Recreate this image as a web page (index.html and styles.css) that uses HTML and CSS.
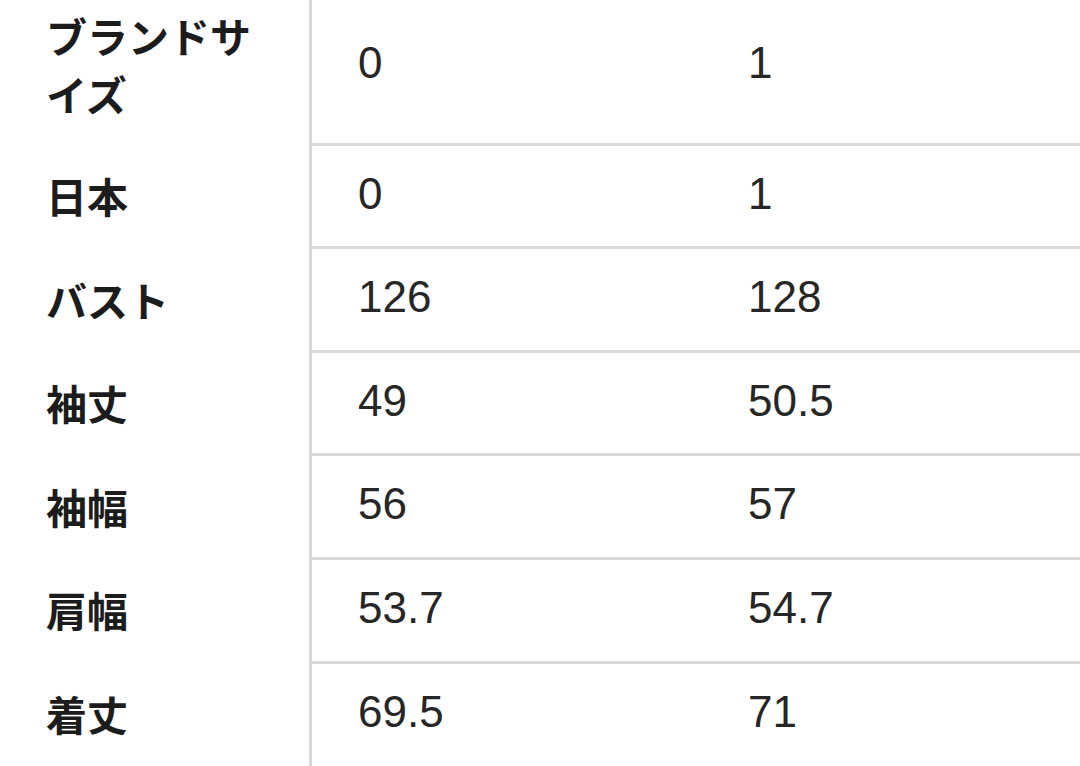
FILE: index.html
```html
<!DOCTYPE html>
<html lang="ja">
<head>
<meta charset="utf-8">
<title>サイズ表</title>
<link rel="stylesheet" href="styles.css">
</head>
<body>
<table class="size-table">
  <colgroup>
    <col class="col-label">
    <col class="col-a">
    <col class="col-b">
  </colgroup>
  <tbody>
    <tr><th>ブランドサイズ</th><td>0</td><td>1</td></tr>
    <tr><th>日本</th><td>0</td><td>1</td></tr>
    <tr><th>バスト</th><td>126</td><td>128</td></tr>
    <tr><th>袖丈</th><td>49</td><td>50.5</td></tr>
    <tr><th>袖幅</th><td>56</td><td>57</td></tr>
    <tr><th>肩幅</th><td>53.7</td><td>54.7</td></tr>
    <tr><th>着丈</th><td>69.5</td><td>71</td></tr>
  </tbody>
</table>
</body>
</html>
```

FILE: styles.css
```css
html, body {
  margin: 0;
  padding: 0;
  background: #ffffff;
  overflow: hidden;
}

.size-table {
  border-collapse: separate;
  border-spacing: 0;
  table-layout: fixed;
  width: 1080px;
  margin-top: -13px;
  color: #1c1c1c;
}

.col-label { width: 312px; }
.col-a { width: 390px; }
.col-b { width: 378px; }

.size-table th,
.size-table td {
  padding: 19px 46px 23.6px;
  line-height: 58px;
  vertical-align: middle;
  text-align: left;
}

.size-table th {
  font-family: "Noto Sans CJK JP", "Noto Sans", sans-serif;
  font-size: 41px;
  font-weight: 700;
  border-right: 3px solid #d9d9d9;
  padding-right: 50px;
}

.size-table td {
  font-family: "Liberation Sans", "Noto Sans CJK JP", sans-serif;
  font-size: 44px;
  font-weight: 400;
  color: #262626;
  border-bottom: 3px solid #d9d9d9;
}

.size-table tr:last-child td {
  border-bottom: none;
  padding-bottom: 26.6px;
}
```
